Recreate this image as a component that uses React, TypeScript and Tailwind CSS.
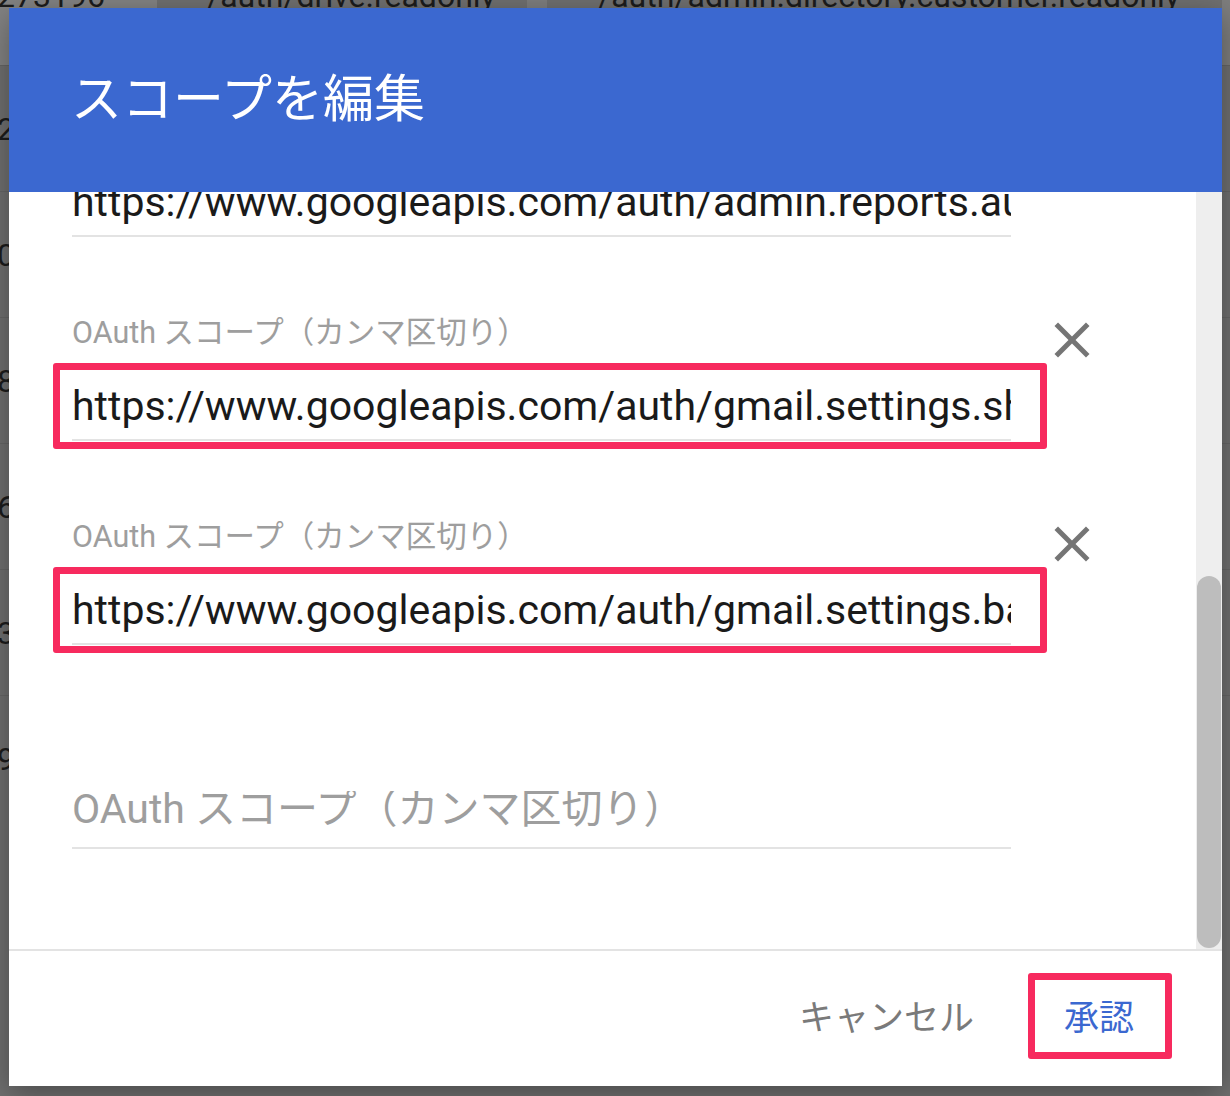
import React from "react";

const TABLE_ROWS = ["215804", "098312", "847205", "603918", "351742", "920467"];

const SCOPES = [
  { value: "https://www.googleapis.com/auth/admin.reports.audit.readonly", marked: false },
  { value: "https://www.googleapis.com/auth/gmail.settings.sharing", marked: true },
  { value: "https://www.googleapis.com/auth/gmail.settings.basic", marked: true },
];

function CloseIcon(): React.ReactElement {
  return (
    <svg viewBox="0 0 24 24" className="h-[60px] w-[60px]" fill="#757575">
      <path d="M19 6.41L17.59 5 12 10.59 6.41 5 5 6.41 10.59 12 5 17.59 6.41 19 12 13.41 17.59 19 19 17.59 13.41 12z" />
    </svg>
  );
}

function ScopeField({
  value,
  marked,
}: {
  value?: string;
  marked?: boolean;
}): React.ReactElement {
  const filled = value !== undefined;
  return (
    <div className="flex">
      <div className="w-[939px]">
        <label className="block h-[40px] whitespace-nowrap text-[30.5px] leading-[40px] text-[#9e9e9e]">
          {filled ? "OAuth スコープ（カンマ区切り）" : ""}
        </label>
        <div className="relative mt-[30px]">
          {filled ? (
            <input
              readOnly
              value={value}
              className="block h-[48px] w-full bg-transparent p-0 text-[41px] text-[#1a1a1a] outline-none"
            />
          ) : (
            <input
              readOnly
              placeholder="OAuth スコープ（カンマ区切り）"
              className="block h-[48px] w-full bg-transparent p-0 pb-[10px] text-[41px] text-[#1a1a1a] outline-none placeholder:text-[#9e9e9e]"
            />
          )}
          <div className="mt-[8px] h-[2px] bg-[#e3e3e3]" />
          {/* red highlight frame */}
          {marked && (
            <span className="pointer-events-none absolute -top-[20px] -right-[36px] -bottom-[8px] -left-[19px] rounded-[3px] border-[7px] border-[#f72a5e]" />
          )}
        </div>
      </div>
      {filled && (
        <button className="-mt-[3px] ml-[31px] h-[60px] w-[60px]">
          <CloseIcon />
        </button>
      )}
    </div>
  );
}

export default function App(): React.ReactElement {
  return (
    <div className="relative h-[1096px] w-[1230px] overflow-hidden bg-[#707070] font-['Roboto','Noto_Sans_CJK_JP',sans-serif]">
      {/* dimmed table behind the dialog */}
      <div className="-mt-[64px] text-[32px] text-[#1c1c1c]">
        <div className="flex h-[129px]">
          <div className="flex w-[157px] items-center bg-[#838383] pb-[9px] pl-0">
            <span className="-ml-[3px]">273196</span>
          </div>
          <div className="flex w-[370px] items-center pb-[9px] pl-[50px]">/auth/drive.readonly</div>
          <div className="w-[20px] bg-[#7e7e7e]" />
          <div className="flex flex-1 items-center pb-[9px] pl-[51px]">
            /auth/admin.directory.customer.readonly
          </div>
          <div className="w-[8px] bg-[#7e7e7e]" />
        </div>
        {TABLE_ROWS.map((id) => (
          <div key={id} className="flex h-[126px] items-center border-t border-[#666]">
            <span className="-ml-[3px]">{id}</span>
          </div>
        ))}
      </div>

      {/* dialog */}
      <div className="absolute top-[8px] left-[9px] flex h-[1078px] w-[1213px] flex-col bg-white shadow-[0_8px_30px_rgba(0,0,0,0.35)]">
        <div className="flex h-[184px] shrink-0 items-center bg-[#3b68d0] pl-[62px]">
          <h2 className="text-[51px] font-normal text-white">スコープを編集</h2>
        </div>

        <div className="flex h-[757px] shrink-0">
          <div className="flex-1 overflow-hidden pl-[63px]">
            <div className="-mt-[83px] flex flex-col gap-[76px]">
              {SCOPES.map((s) => (
                <ScopeField key={s.value} value={s.value} marked={s.marked} />
              ))}
              <ScopeField />
            </div>
          </div>
          <div className="flex w-[26px] flex-col justify-end bg-[#eeeeee] pb-[1px]">
            <div className="mx-[1px] h-[372px] rounded-full bg-[#bdbdbd]" />
          </div>
        </div>

        <div className="h-[2px] shrink-0 bg-[#e3e3e3]" />

        <div className="flex flex-1 items-center justify-end gap-[31px] pr-[57px] pb-[5px] text-[35px]">
          <button className="h-[72px] px-[30px] pt-[6px] text-[#7a7a7a]">キャンセル</button>
          <div className="relative">
            <button className="h-[72px] w-[130px] pt-[6px] pr-[2px] text-[#3b68d0]">承認</button>
            <span className="pointer-events-none absolute -inset-[7px] rounded-[3px] border-[7px] border-[#f72a5e]" />
          </div>
        </div>
      </div>
    </div>
  );
}
